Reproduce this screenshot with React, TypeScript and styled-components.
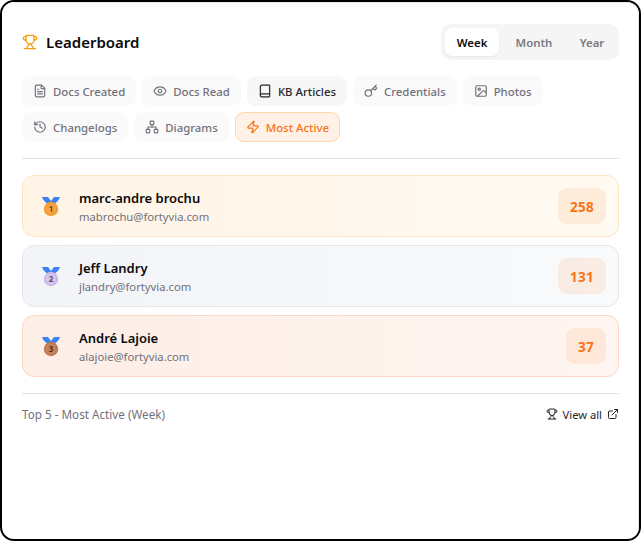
import React from "react";
import styled, { createGlobalStyle } from "styled-components";
import { Trophy, FileText, Eye, Book, Key, Image, History, Network, Zap, ExternalLink } from "lucide-react";

const Global = createGlobalStyle`
  html, body { margin: 0; padding: 0; background: #fff; }
  body { font-family: "Noto Sans", "Open Sans", sans-serif; }
  * { box-sizing: border-box; }
`;

const Frame = styled.div`
  width: 641px;
  height: 541px;
  border: 2px solid #000;
  border-radius: 14px;
  background: #fff;
`;

const Card = styled.div`
  height: 100%;
  border: 1px solid #e8e8e8;
  border-bottom: none;
  border-left: none;
  border-radius: 12px;
  padding: 21px 19px 0 20px;
`;

const Header = styled.header`
  display: flex;
  align-items: center;
  justify-content: space-between;
  height: 36px;
`;

const Title = styled.div`
  display: flex;
  align-items: center;
  gap: 8px;
  font-size: 15px;
  font-weight: 600;
  color: #0a0a0a;
`;

const Segmented = styled.div`
  display: flex;
  height: 36px;
  padding: 4px;
  gap: 4px;
  background: #f5f5f5;
  border-radius: 10px;
`;

const Segment = styled.div<{ $active?: boolean; $w: number }>`
  width: ${(p) => p.$w}px;
  display: flex;
  align-items: center;
  justify-content: center;
  border-radius: 7px;
  font-size: 11.4px;
  font-weight: 600;
  color: ${(p) => (p.$active ? "#0a0a0a" : "#7a7a80")};
  background: ${(p) => (p.$active ? "#fff" : "transparent")};
  box-shadow: ${(p) => (p.$active ? "0 1px 2px rgba(0,0,0,.06)" : "none")};
`;

const Tabs = styled.div`
  display: flex;
  flex-wrap: wrap;
  gap: 6px;
  margin-top: 16px;
`;

const Tab = styled.div<{ $variant?: "dark" | "active" }>`
  display: flex;
  align-items: center;
  gap: 6px;
  height: 30px;
  padding: 0 10px;
  border-radius: 9px;
  font-size: 11.4px;
  font-weight: 500;
  border: 1px solid ${(p) => (p.$variant === "active" ? "#fed7aa" : "transparent")};
  background: ${(p) => (p.$variant === "active" ? "#fff1e6" : p.$variant === "dark" ? "#f7f7f7" : "#fafafa")};
  color: ${(p) => (p.$variant === "active" ? "#f97316" : p.$variant === "dark" ? "#27272a" : "#71717a")};
`;

const Divider = styled.hr<{ $top: number }>`
  border: none;
  height: 1px;
  background: #e5e5e5;
  margin: ${(p) => p.$top}px 0 0;
`;

const List = styled.div`
  display: flex;
  flex-direction: column;
  gap: 8px;
  margin-top: 16px;
`;

const tones = {
  gold: { bg: "linear-gradient(90deg,#fff4e6,#fffaf2)", border: "#fde6bf" },
  silver: { bg: "linear-gradient(90deg,#f3f4f8,#f9fafb)", border: "#e5e7eb" },
  bronze: { bg: "linear-gradient(90deg,#fdeee6,#fff5f1)", border: "#fbd7c4" },
};

const Row = styled.div<{ $tone: keyof typeof tones }>`
  display: flex;
  align-items: center;
  height: 62px;
  padding: 0 12px 0 16px;
  border-radius: 12px;
  border: 1px solid ${(p) => tones[p.$tone].border};
  background: ${(p) => tones[p.$tone].bg};
`;

const MedalSlot = styled.div`
  width: 24px;
  display: flex;
  justify-content: center;
  margin-right: 16px;
`;

const Person = styled.div`
  flex: 1;
  display: flex;
  flex-direction: column;
  gap: 2px;
  padding-top: 2px;
`;

const Name = styled.div`
  font-size: 13px;
  font-weight: 600;
  line-height: 18px;
  color: #0a0a0a;
`;

const Email = styled.div`
  font-size: 11.25px;
  line-height: 16px;
  color: #71717a;
`;

const Score = styled.div`
  height: 36px;
  min-width: 40px;
  padding: 1px 12px 0;
  display: flex;
  align-items: center;
  justify-content: center;
  border-radius: 9px;
  background: rgba(249, 115, 22, 0.1);
  color: #f97316;
  font-size: 13.5px;
  font-weight: 700;
  letter-spacing: 0.3px;
`;

const Footer = styled.div`
  display: flex;
  justify-content: space-between;
  align-items: center;
  margin-top: 10px;
  height: 20px;
  font-size: 11.7px;
`;

const Caption = styled.div`
  color: #71717a;
`;

const ViewAll = styled.div`
  display: flex;
  align-items: center;
  gap: 5px;
  font-size: 11.2px;
  color: #27272a;
`;

const Medal = ({ n, fill, ring, text }: { n: number; fill: string; ring: string; text: string }) => (
  <svg width="20" height="24" viewBox="0 0 20 24">
    <path d="M1 3h6l3 4 3-4h6c-1 3.500-4 6-7 7.500h-4c-3-1.500-6-4-7-7.500z" fill="#3b82f6" />
    <circle cx="10" cy="15" r="7.2" fill={fill} />
    <circle cx="10" cy="15" r="5" fill={ring} />
    <text x="10" y="18" textAnchor="middle" fontSize="8" fontWeight="700" fill={text} fontFamily="Noto Sans">{n}</text>
  </svg>
);

const tabItems = [
  { label: "Docs Created", icon: FileText },
  { label: "Docs Read", icon: Eye },
  { label: "KB Articles", icon: Book, variant: "dark" as const },
  { label: "Credentials", icon: Key },
  { label: "Photos", icon: Image },
  { label: "Changelogs", icon: History },
  { label: "Diagrams", icon: Network },
  { label: "Most Active", icon: Zap, variant: "active" as const },
];

const rows = [
  { name: "marc-andre brochu", email: "mabrochu@fortyvia.com", score: 258, tone: "gold" as const, m: { n: 1, fill: "#f59a30", ring: "#f4a347", text: "#7a4a10" } },
  { name: "Jeff Landry", email: "jlandry@fortyvia.com", score: 131, tone: "silver" as const, m: { n: 2, fill: "#cdb9e6", ring: "#d8c8ee", text: "#5a5070" } },
  { name: "André Lajoie", email: "alajoie@fortyvia.com", score: 37, tone: "bronze" as const, m: { n: 3, fill: "#bd7a50", ring: "#c4855c", text: "#5a2e14" } },
];

export default function App() {
  return (
    <>
      <Global />
      <Frame>
        <Card>
          <Header>
            <Title>
              <Trophy size={16} color="#f59e0b" />
              Leaderboard
            </Title>
            <Segmented>
              <Segment $active $w={54}>Week</Segment>
              <Segment $w={62}>Month</Segment>
              <Segment $w={46}>Year</Segment>
            </Segmented>
          </Header>
          <Tabs>
            {tabItems.map(({ label, icon: Icon, variant }) => (
              <Tab key={label} $variant={variant}>
                <Icon size={14} />
                {label}
              </Tab>
            ))}
          </Tabs>
          <Divider $top={16} />
          <List>
            {rows.map((r) => (
              <Row key={r.email} $tone={r.tone}>
                <MedalSlot><Medal {...r.m} /></MedalSlot>
                <Person>
                  <Name>{r.name}</Name>
                  <Email>{r.email}</Email>
                </Person>
                <Score>{r.score}</Score>
              </Row>
            ))}
          </List>
          <Divider $top={16} />
          <Footer>
            <Caption>Top 5 - Most Active (Week)</Caption>
            <ViewAll>
              <Trophy size={12} />
              View all
              <ExternalLink size={12} />
            </ViewAll>
          </Footer>
        </Card>
      </Frame>
    </>
  );
}
